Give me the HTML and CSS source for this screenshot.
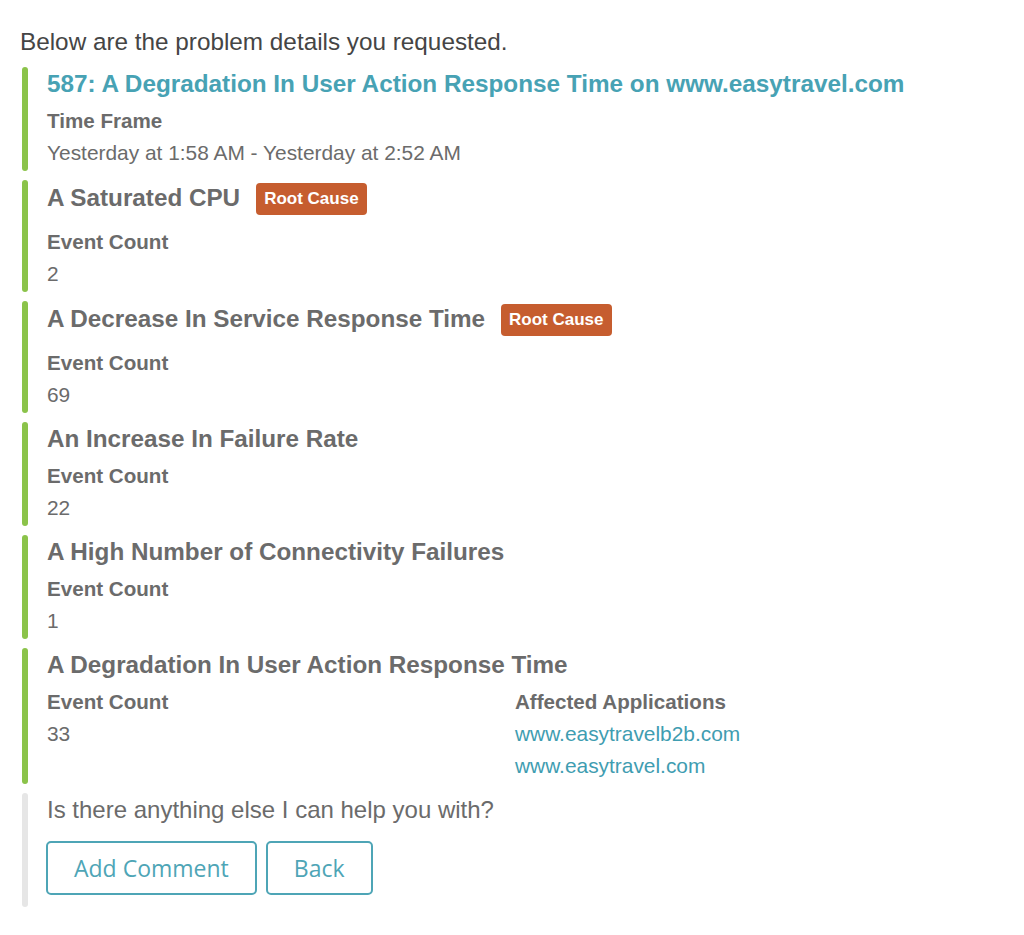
FILE: index.html
```html
<!DOCTYPE html>
<html lang="en">
<head>
<meta charset="utf-8">
<title>Problem details</title>
<link rel="stylesheet" href="styles.css">
</head>
<body>
<p class="intro">Below are the problem details you requested.</p>

<div class="block">
  <div class="bar"></div>
  <div class="content">
    <div class="title-row"><a class="problem-title" href="#">587: A Degradation In User Action Response Time on www.easytravel.com</a></div>
    <div class="label">Time Frame</div>
    <div class="value">Yesterday at 1:58 AM - Yesterday at 2:52 AM</div>
  </div>
</div>

<div class="block">
  <div class="bar"></div>
  <div class="content">
    <div class="title-row has-badge"><span class="heading">A Saturated CPU</span><span class="badge">Root Cause</span></div>
    <div class="label">Event Count</div>
    <div class="value">2</div>
  </div>
</div>

<div class="block">
  <div class="bar"></div>
  <div class="content">
    <div class="title-row has-badge"><span class="heading">A Decrease In Service Response Time</span><span class="badge">Root Cause</span></div>
    <div class="label">Event Count</div>
    <div class="value">69</div>
  </div>
</div>

<div class="block">
  <div class="bar"></div>
  <div class="content">
    <div class="title-row"><span class="heading">An Increase In Failure Rate</span></div>
    <div class="label">Event Count</div>
    <div class="value">22</div>
  </div>
</div>

<div class="block">
  <div class="bar"></div>
  <div class="content">
    <div class="title-row"><span class="heading">A High Number of Connectivity Failures</span></div>
    <div class="label">Event Count</div>
    <div class="value">1</div>
  </div>
</div>

<div class="block">
  <div class="bar"></div>
  <div class="content">
    <div class="title-row"><span class="heading">A Degradation In User Action Response Time</span></div>
    <div class="cols">
      <div class="col">
        <div class="label">Event Count</div>
        <div class="value">33</div>
      </div>
      <div class="col">
        <div class="label">Affected Applications</div>
        <a class="value link" href="#">www.easytravelb2b.com</a>
        <a class="value link" href="#">www.easytravel.com</a>
      </div>
    </div>
  </div>
</div>

<div class="block final">
  <div class="bar grey"></div>
  <div class="content">
    <div class="question">Is there anything else I can help you with?</div>
    <div class="actions">
      <button class="btn" type="button">Add Comment</button>
      <button class="btn" type="button">Back</button>
    </div>
  </div>
</div>
</body>
</html>
```

FILE: styles.css
```css
* { box-sizing: border-box; }

html, body {
  background: #ffffff;
}

body {
  margin: 0;
  padding: 26px 20px 20px 20px;
  font-family: "Liberation Sans", Arial, Helvetica, sans-serif;
  color: #6b6b6b;
}

.intro {
  margin: 0 0 9px 0;
  font-size: 24.3px;
  line-height: 32px;
  color: #454545;
}

.block {
  display: flex;
  gap: 19px;
  margin: 0 0 9px 2px;
}

.bar {
  flex: 0 0 6px;
  width: 6px;
  border-radius: 3px;
  background: #8bc34a;
}

.bar.grey {
  background: #e6e6e6;
}

.content {
  flex: 1;
  padding: 1px 0 2px 0;
  min-width: 0;
}

.title-row {
  display: flex;
  align-items: center;
  gap: 16px;
  height: 32px;
  margin-bottom: 5px;
}

.title-row.has-badge {
  height: 34px;
  margin-bottom: 11px;
}

.problem-title {
  font-size: 24.3px;
  font-weight: bold;
  color: #47a2b4;
  text-decoration: none;
  white-space: nowrap;
}

.heading {
  font-size: 24.25px;
  font-weight: bold;
  color: #6b6b6b;
  white-space: nowrap;
}

.badge {
  display: inline-flex;
  align-items: center;
  height: 32px;
  margin-top: 2px;
  padding: 0 8px;
  border-radius: 4px;
  background: #c65d2f;
  color: #ffffff;
  font-size: 17px;
  font-weight: bold;
}

.label {
  font-size: 20.6px;
  font-weight: bold;
  line-height: 32px;
  color: #6b6b6b;
}

.value {
  display: block;
  font-size: 20.9px;
  line-height: 32px;
  color: #6b6b6b;
}

.link {
  color: #3f9db1;
  text-decoration: none;
}

.cols {
  display: grid;
  grid-template-columns: 1fr 1fr;
  max-width: 936px;
}

.final .content {
  padding: 1px 0 12px 0;
}

.question {
  font-size: 24px;
  line-height: 32px;
  color: #6b6b6b;
  margin-bottom: 15px;
}

.actions {
  display: flex;
  gap: 9px;
  margin-left: -1px;
}

.btn {
  height: 54px;
  padding: 0 26px;
  border: 2px solid #4ea5b6;
  border-radius: 5px;
  background: #ffffff;
  color: #4ea5b6;
  font-family: "Open Sans", "Liberation Sans", sans-serif;
  font-size: 23px;
  cursor: pointer;
}
```
